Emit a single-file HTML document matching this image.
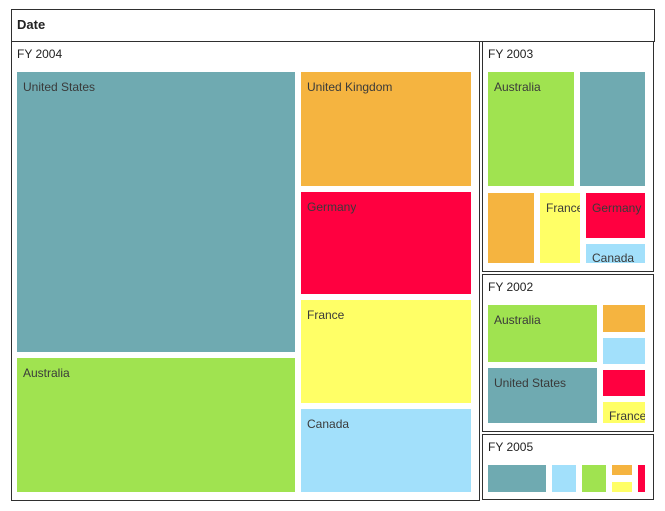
<!DOCTYPE html>
<html><head><meta charset="utf-8"><style>
*{margin:0;padding:0;box-sizing:border-box}
body{width:665px;height:511px;background:#fff;position:relative;overflow:hidden;font-family:"Segoe UI","Liberation Sans",sans-serif;font-size:12px;color:#333}
div{position:absolute}
.b{border:1.5px solid #2f2f2f}
.h{font-size:12px;color:#222;margin-top:1px}
.t{color:#3a3a3a;font-size:12px;white-space:nowrap;overflow:hidden;margin-top:1px}
.T{background:#6faab1}.G{background:#a0e350}.O{background:#f5b440}.R{background:#ff0040}.Y{background:#ffff66}.C{background:#a2e0fb}
</style></head><body>
<div class="b" style="left:11px;top:9px;width:644px;height:33px"></div>
<div style="left:17px;top:17px;font-weight:bold;font-size:13px;color:#222">Date</div>

<div class="b" style="left:11px;top:41px;width:469px;height:460px"></div>
<div class="h" style="left:17px;top:46px">FY 2004</div>
<div class="T" style="left:17px;top:72px;width:278px;height:280px"></div><div class="t" style="left:23px;top:79px">United States</div>
<div class="G" style="left:17px;top:358px;width:278px;height:134px"></div><div class="t" style="left:23px;top:365px">Australia</div>
<div class="O" style="left:301px;top:72px;width:170px;height:114px"></div><div class="t" style="left:307px;top:79px">United Kingdom</div>
<div class="R" style="left:301px;top:192px;width:170px;height:102px"></div><div class="t" style="left:307px;top:199px">Germany</div>
<div class="Y" style="left:301px;top:300px;width:170px;height:103px"></div><div class="t" style="left:307px;top:307px">France</div>
<div class="C" style="left:301px;top:409px;width:170px;height:83px"></div><div class="t" style="left:307px;top:416px">Canada</div>

<div class="b" style="left:482px;top:41px;width:172px;height:231px"></div>
<div class="h" style="left:488px;top:46px">FY 2003</div>
<div class="G" style="left:488px;top:72px;width:86px;height:114px"></div><div class="t" style="left:494px;top:79px">Australia</div>
<div class="T" style="left:580px;top:72px;width:65px;height:114px"></div>
<div class="O" style="left:488px;top:193px;width:46px;height:70px"></div>
<div class="Y" style="left:540px;top:193px;width:40px;height:70px"></div><div class="t" style="left:546px;top:200px;width:34px">France</div>
<div class="R" style="left:586px;top:193px;width:59px;height:45px"></div><div class="t" style="left:592px;top:200px;width:53px">Germany</div>
<div class="C" style="left:586px;top:244px;width:59px;height:19px"></div><div class="t" style="left:592px;top:250px;width:53px;height:13px">Canada</div>

<div class="b" style="left:482px;top:274px;width:172px;height:158px"></div>
<div class="h" style="left:488px;top:279px">FY 2002</div>
<div class="G" style="left:488px;top:305px;width:109px;height:57px"></div><div class="t" style="left:494px;top:312px">Australia</div>
<div class="T" style="left:488px;top:368px;width:109px;height:55px"></div><div class="t" style="left:494px;top:375px">United States</div>
<div class="O" style="left:603px;top:305px;width:42px;height:27px"></div>
<div class="C" style="left:603px;top:338px;width:42px;height:26px"></div>
<div class="R" style="left:603px;top:370px;width:42px;height:26px"></div>
<div class="Y" style="left:603px;top:402px;width:42px;height:21px"></div><div class="t" style="left:609px;top:408px;width:36px;height:14px">France</div>

<div class="b" style="left:482px;top:434px;width:172px;height:66px"></div>
<div class="h" style="left:488px;top:439px">FY 2005</div>
<div class="T" style="left:488px;top:465px;width:58px;height:27px"></div>
<div class="C" style="left:552px;top:465px;width:24px;height:27px"></div>
<div class="G" style="left:582px;top:465px;width:24px;height:27px"></div>
<div class="O" style="left:612px;top:465px;width:20px;height:10px"></div>
<div class="Y" style="left:612px;top:482px;width:20px;height:10px"></div>
<div class="R" style="left:638px;top:465px;width:7px;height:27px"></div>
</body></html>
